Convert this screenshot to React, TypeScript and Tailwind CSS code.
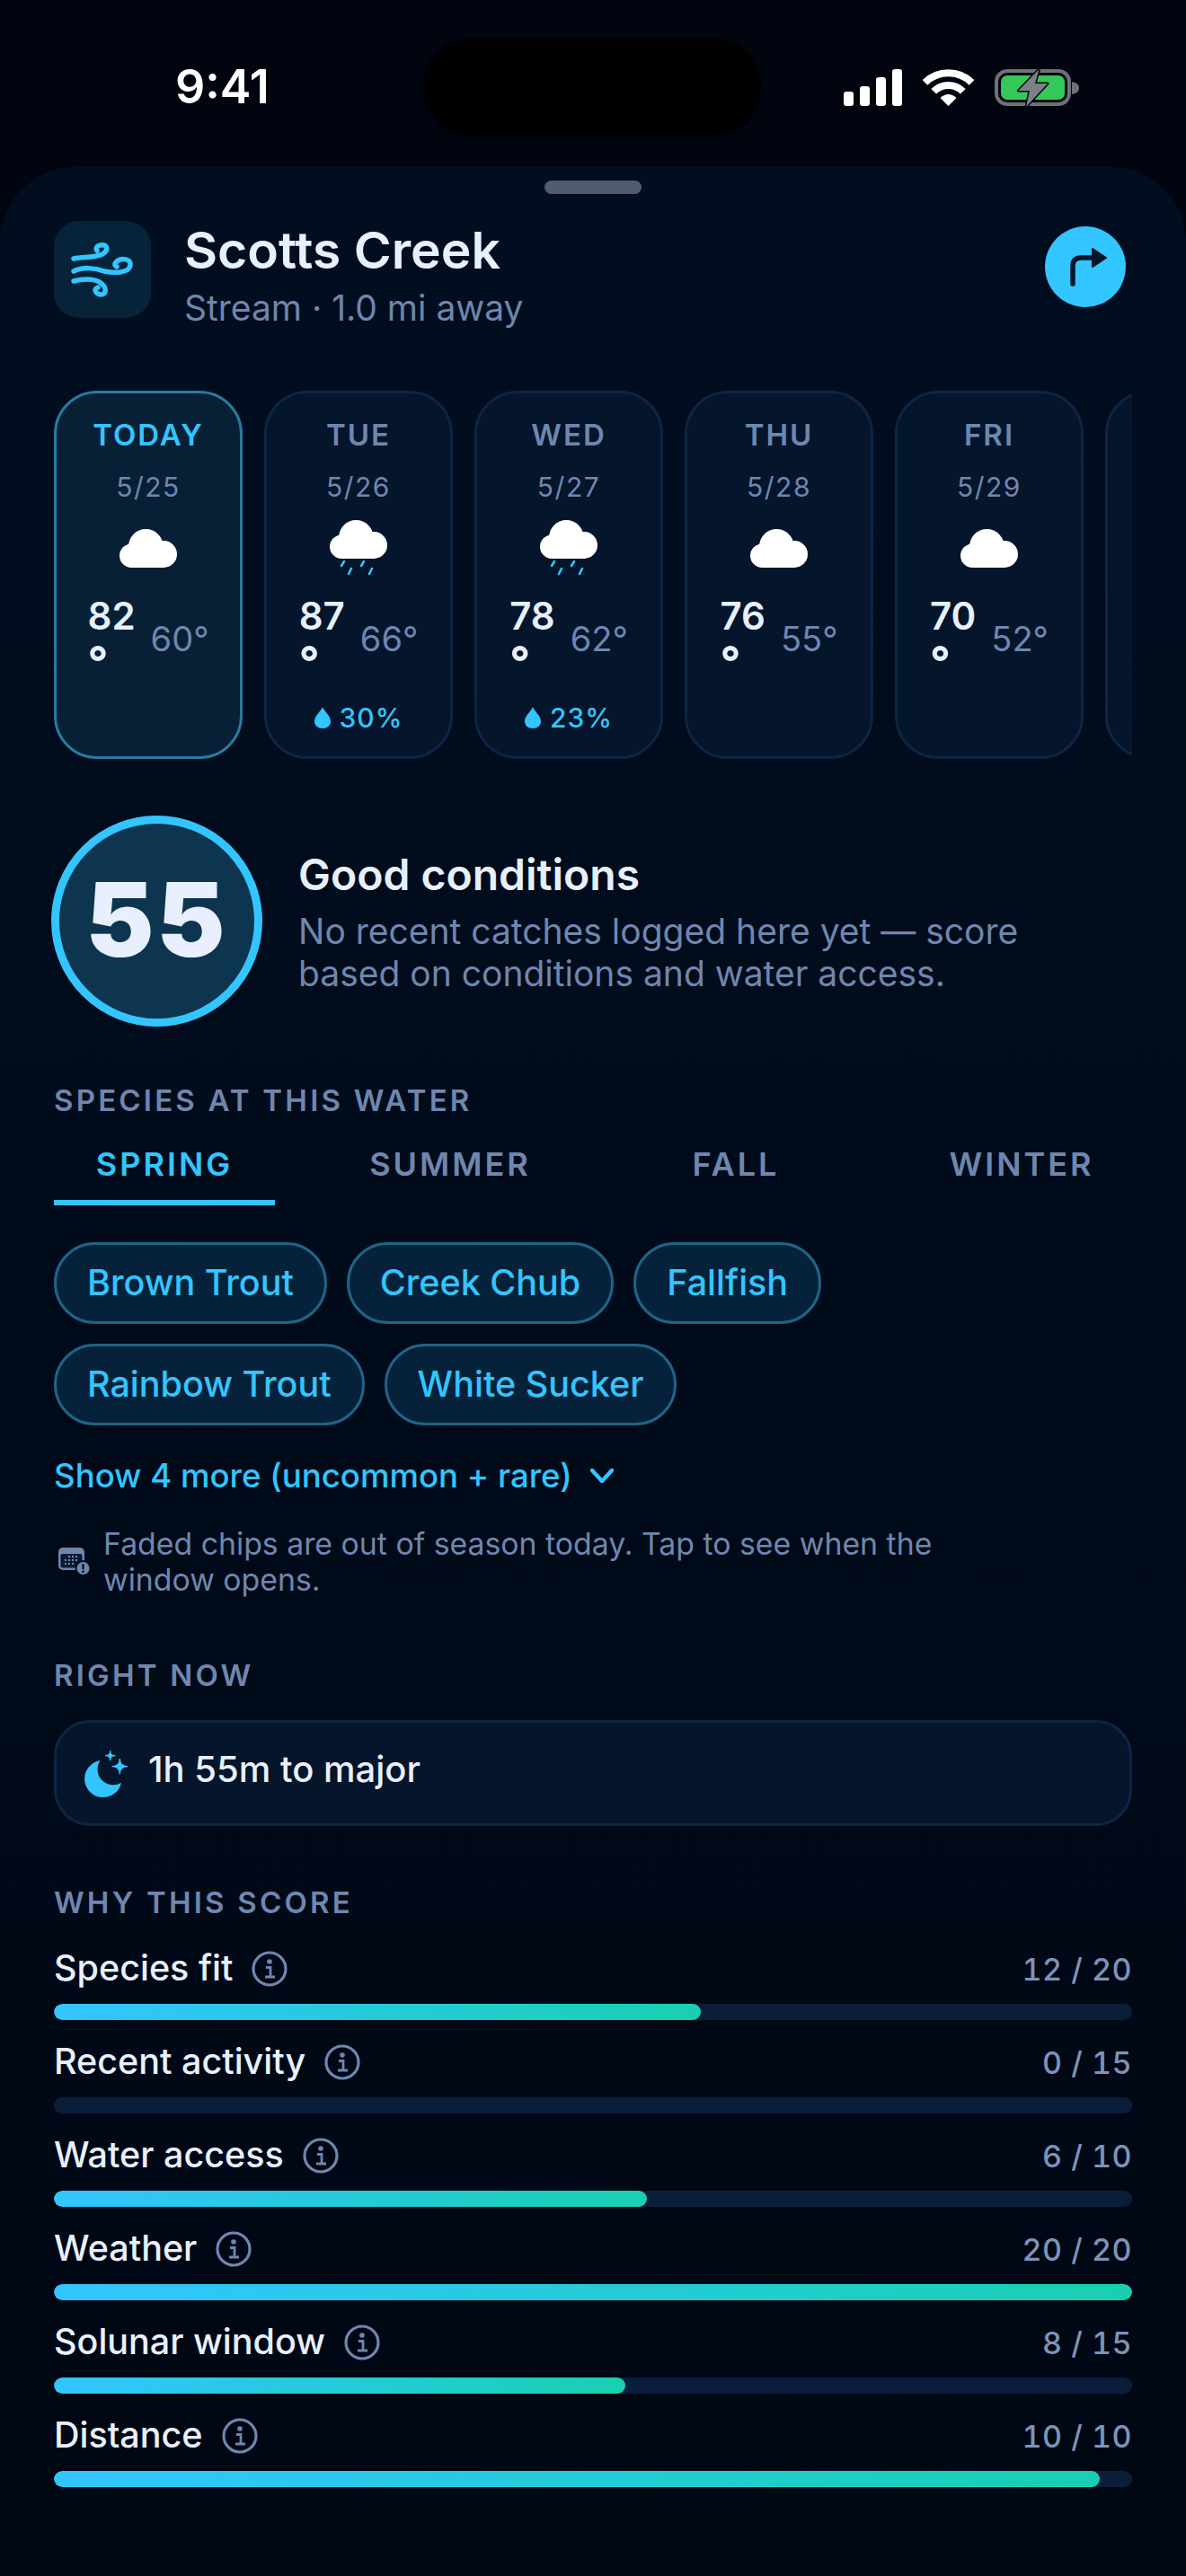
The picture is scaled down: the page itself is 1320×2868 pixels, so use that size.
const days = [
  { name: "TODAY", date: "5/25", high: "82", low: "60°", today: true },
  { name: "TUE", date: "5/26", high: "87", low: "66°", rain: "30%" },
  { name: "WED", date: "5/27", high: "78", low: "62°", rain: "23%" },
  { name: "THU", date: "5/28", high: "76", low: "55°" },
  { name: "FRI", date: "5/29", high: "70", low: "52°" },
];

const chips = ["Brown Trout", "Creek Chub", "Fallfish", "Rainbow Trout", "White Sucker"];

const scores = [
  { label: "Species fit", value: "12 / 20", pct: 60 },
  { label: "Recent activity", value: "0 / 15", pct: 0 },
  { label: "Water access", value: "6 / 10", pct: 55 },
  { label: "Weather", value: "20 / 20", pct: 100 },
  { label: "Solunar window", value: "8 / 15", pct: 53 },
  { label: "Distance", value: "10 / 10", pct: 97 },
];

function StatusIcons() {
  return (
    <div className="flex items-center">
      <svg width="65" height="41" viewBox="0 0 65 41" fill="#fff">
        <rect x="0" y="25" width="11" height="16" rx="3" />
        <rect x="18" y="19" width="11" height="22" rx="3" />
        <rect x="36" y="9" width="11" height="32" rx="3" />
        <rect x="54" y="0" width="11" height="41" rx="3" />
      </svg>
      <svg className="ml-[23px]" width="57" height="41" viewBox="0 0 57 41" fill="none" stroke="#fff" strokeWidth="8">
        <path d="M2.5 15 A37 37 0 0 1 54.5 15" />
        <path d="M12.2 24.7 A23 23 0 0 1 44.8 24.7" />
        <path d="M28.5 41 L19.5 32 Q28.5 24 37.5 32 Z" fill="#fff" stroke="none" />
      </svg>
      <svg className="ml-[23px]" width="94" height="43" viewBox="0 0 94 43" fill="none">
        <rect x="2" y="3" width="81" height="37" rx="12" stroke="#6e7178" strokeWidth="4" />
        <rect x="7" y="8" width="71" height="27" rx="7" fill="#34c759" />
        <path d="M86 15 C91 16 94 18 94 22 C94 26 91 28 86 29 Z" fill="#6e7178" />
        <path
          d="M49.5 1 L26.4 25 L39 25 L35 43 L59 17 L45 17 Z"
          fill="#7d8087"
          stroke="#01060f"
          strokeWidth="3"
          strokeLinejoin="round"
          paintOrder="stroke"
        />
      </svg>
    </div>
  );
}

function WindIcon() {
  return (
    <svg width="90" height="80" viewBox="0 0 90 80" fill="none" stroke="#33c5ff" strokeWidth="5.5" strokeLinecap="round">
      <path d="M13 28 C23 26 37 27 45 23 C53 18 50 12 43 13 C39 13 37 17 39 19" />
      <path d="M13 42 C23 37 37 38 47 42 C57 44 75 45 76 35 C77 28 65 26 60 32 C58 34 59 36 61 37" />
      <path d="M13 53 C23 50 37 50 43 55 C50 60 50 68 43 68 C37 67 35 62 40 60" />
    </svg>
  );
}

function Cloud({ rain }: { rain?: boolean }) {
  return (
    <svg width="64" height={rain ? 62 : 43} viewBox={rain ? "0 0 64 62" : "0 0 64 43"} fill="#fff">
      <circle cx="29.3" cy="19.3" r="19.3" />
      <circle cx="13.3" cy="29.7" r="13.3" />
      <circle cx="49" cy="28" r="15" />
      <rect x="13" y="26" width="37" height="17" />
      {rain && (
        <g stroke="#33c5ff" strokeWidth="2.6" strokeLinecap="round">
          <path d="M16 46 L13 51" />
          <path d="M24 54 L21 60" />
          <path d="M38 46 L35 51" />
          <path d="M47 54 L44 60" />
        </g>
      )}
    </svg>
  );
}

function Drop() {
  return (
    <svg width="18" height="24" viewBox="0 0 18 24" fill="#33c5ff">
      <path d="M9 0 C11 5 18 10 18 16 C18 21 14 24 9 24 C4 24 0 21 0 16 C0 10 7 5 9 0 Z" />
    </svg>
  );
}

function DayCard({ day }: { day: (typeof days)[number] }) {
  return (
    <div
      className={`flex h-[410px] w-[210px] shrink-0 flex-col items-center rounded-[48px] border-[3px] pt-[26px] pb-[25px] ${
        day.today ? "border-[#2a7a9e] bg-[#072036]" : "border-[#0c2643] bg-[#04152c]"
      }`}
    >
      <div
        className={`text-[33px] leading-[40px] font-semibold tracking-[2px] ${
          day.today ? "text-[#33c5ff]" : "text-[#6f87ae]"
        }`}
      >
        {day.name}
      </div>
      <div className="mt-[18px] text-[30px] leading-[40px] tracking-[1.5px] text-[#6f87ae]">{day.date}</div>
      <div className="mt-[13px] flex h-[70px] items-center justify-center">
        <Cloud rain={!!day.rain} />
      </div>
      <div className="mt-[15px] flex items-center gap-[17px]">
        <div className="text-[42px] leading-[52px] font-semibold text-[#e8f0ff]">
          {day.high}
          <br />
          <span className="text-[50px] leading-none font-bold">°</span>
        </div>
        <div className="mb-[4px] text-[38px] leading-[48px] text-[#6f87ae]">{day.low}</div>
      </div>
      {day.rain && (
        <div className="mt-auto flex items-center gap-[10px] text-[30px] leading-[36px] font-medium tracking-[1px] text-[#33c5ff]">
          <Drop />
          {day.rain}
        </div>
      )}
    </div>
  );
}

function SectionLabel({ children }: { children: string }) {
  return <div className="text-[33px] leading-[40px] font-semibold tracking-[3.2px] text-[#6f87ae]">{children}</div>;
}

function InfoIcon() {
  return (
    <svg width="40" height="40" viewBox="0 0 40 40" fill="none" stroke="#6f87ae" strokeWidth="3.2">
      <circle cx="20" cy="20" r="18" />
      <circle cx="20" cy="12" r="2.8" fill="#6f87ae" stroke="none" />
      <path d="M16 18.5 H21 V29 M15 29 H26" strokeWidth="2.8" />
    </svg>
  );
}

function CalendarIcon() {
  return (
    <svg className="ml-[4px] shrink-0" width="36" height="32" viewBox="0 0 36 32">
      <rect x="1" y="0" width="29" height="25" rx="5" fill="#6f87ae" />
      <rect x="3.5" y="7" width="24" height="15.5" rx="2" fill="#0b1a33" />
      <g fill="#6f87ae">
        <rect x="12" y="9" width="2" height="2" />
        <rect x="16" y="9" width="2" height="2" />
        <rect x="20" y="9" width="2" height="2" />
        <rect x="8" y="13" width="2" height="2" />
        <rect x="12" y="13" width="2" height="2" />
        <rect x="16" y="13" width="2" height="2" />
        <rect x="20" y="13" width="2" height="2" />
        <rect x="8" y="17" width="2" height="2" />
        <rect x="12" y="17" width="2" height="2" />
        <rect x="16" y="17" width="2" height="2" />
      </g>
      <circle cx="28.5" cy="23" r="9" fill="#010a1b" />
      <circle cx="28.5" cy="23" r="7" fill="#6f87ae" />
      <rect x="27.4" y="18" width="2.2" height="6.4" rx="1" fill="#010a1b" />
      <circle cx="28.5" cy="26.8" r="1.3" fill="#010a1b" />
    </svg>
  );
}

function MoonIcon() {
  return (
    <svg className="shrink-0" width="70" height="60" viewBox="0 0 210 180" fill="#33c5ff">
      <path d="M80 48 A62 62 0 1 0 150 122 A52 52 0 0 1 80 48 Z" />
      <path d="M113 15 Q113 32 130 32 Q113 32 113 49 Q113 32 96 32 Q113 32 113 15 Z" stroke="#33c5ff" strokeWidth="3" />
      <path d="M145 42 Q145 68 171 68 Q145 68 145 94 Q145 68 119 68 Q145 68 145 42 Z" stroke="#33c5ff" strokeWidth="4" />
    </svg>
  );
}

export default function App() {
  return (
    <div
      className="flex h-[2868px] w-[1320px] flex-col overflow-hidden bg-[#01050f] text-[#e8f0ff]"
      style={{ fontFamily: 'Inter, "Liberation Sans", sans-serif' }}
    >
      <header className="flex h-[186px] shrink-0 items-start pt-[42px]">
        <div className="flex h-[110px] w-[471px] items-center pl-[195px] text-[52px] font-semibold text-white">
          9:41
        </div>
        <div className="h-[110px] w-[376px] rounded-full bg-black" />
        <div className="flex h-[110px] items-center pl-[92px]">
          <StatusIcons />
        </div>
      </header>

      <main className="flex-1 rounded-t-[84px] bg-linear-to-b from-[#010e20] to-[#000713] px-[60px] pt-[15px]">
        <div className="mx-auto h-[15px] w-[108px] rounded-full bg-[#4f5b73]" />

        <section className="mt-[30px] flex h-[108px] items-center">
          <div className="flex h-[108px] w-[108px] items-center justify-center rounded-[28px] bg-[#06233a]">
            <WindIcon />
          </div>
          <div className="ml-[37px] flex-1 self-start">
            <h1 className="text-[57px] leading-[66px] font-semibold text-[#e8f0ff]">Scotts Creek</h1>
            <p className="mt-[8px] text-[39px] leading-[46px] text-[#6f87ae]">Stream · 1.0 mi away</p>
          </div>
          <button className="mr-[7px] mb-[6px] flex h-[90px] w-[90px] items-center justify-center rounded-full bg-[#33c5ff] pl-[6px]">
            <svg width="46" height="46" viewBox="0 0 46 46" fill="#04152c">
              <path d="M6 42 V22 Q6 13 15 13 H28" fill="none" stroke="#04152c" strokeWidth="5.5" strokeLinecap="round" />
              <path d="M28 3 L43 13 L28 23 Z" strokeLinejoin="round" stroke="#04152c" strokeWidth="2" />
            </svg>
          </button>
        </section>

        <section className="mt-[81px] flex gap-[24px] overflow-hidden">
          {days.map((day) => (
            <DayCard key={day.name} day={day} />
          ))}
          <div className="h-[410px] w-[210px] shrink-0 rounded-[48px] border-[3px] border-[#0c2643] bg-[#04152c]" />
        </section>

        <section className="mt-[63px] -ml-[3px] flex items-center gap-[40px]">
          <div className="flex h-[235px] w-[235px] shrink-0 items-center justify-center rounded-full border-[9px] border-[#33c5ff] bg-[#0d3550] pb-[4px] text-[114px] leading-none font-black tracking-[3px] text-[#e8f0ff]">
            55
          </div>
          <div className="max-w-[860px]">
            <h2 className="text-[48px] leading-[58px] font-semibold text-[#e8f0ff]">Good conditions</h2>
            <p className="mt-[10px] text-[39px] leading-[47px] text-[#6f87ae]">
              No recent catches logged here yet — score based on conditions and water access.
            </p>
          </div>
        </section>

        <section className="mt-[62px]">
          <SectionLabel>SPECIES AT THIS WATER</SectionLabel>
          <div className="mt-[31px] flex gap-[72px]">
            {["SPRING", "SUMMER", "FALL", "WINTER"].map((tab, i) => (
              <div
                key={tab}
                className={`flex-1 border-b-[6px] pb-[20px] text-center text-[36px] leading-[40px] font-semibold tracking-[3px] ${
                  i === 0 ? "border-[#33c5ff] text-[#33c5ff]" : "border-transparent text-[#6f87ae]"
                }`}
              >
                {tab}
              </div>
            ))}
          </div>
          <div className="mt-[41px] flex flex-wrap gap-[22px]">
            {chips.map((chip) => (
              <div
                key={chip}
                className="flex h-[91px] items-center rounded-full border-[3px] border-[#1f6487] bg-[#06223a] px-[34px] text-[39.5px] font-medium text-[#33c5ff]"
              >
                {chip}
              </div>
            ))}
          </div>
          <div className="mt-[32px] flex h-[48px] items-center gap-[20px] text-[36.6px] font-medium text-[#33c5ff]">
            Show 4 more (uncommon + rare)
            <svg width="26" height="16" viewBox="0 0 26 16" fill="none" stroke="#33c5ff" strokeWidth="4.5" strokeLinecap="round" strokeLinejoin="round">
              <path d="M2 2 L13 14 L24 2" />
            </svg>
          </div>
          <div className="mt-[32px] flex max-w-[1000px] items-center gap-[15px]">
            <CalendarIcon />
            <p className="text-[33.8px] leading-[40px] text-[#6f87ae]">
              Faded chips are out of season today. Tap to see when the window opens.
            </p>
          </div>
        </section>

        <section className="mt-[66px]">
          <SectionLabel>RIGHT NOW</SectionLabel>
          <div className="mt-[30px] flex h-[118px] items-center gap-[10px] rounded-[40px] border-[3px] border-[#0c2643] bg-[#04152c] pl-[22px] text-[40px] font-medium text-[#e8f0ff]">
            <MoonIcon />
            <span className="pb-[8px]">1h 55m to major</span>
          </div>
        </section>

        <section className="mt-[65px]">
          <SectionLabel>WHY THIS SCORE</SectionLabel>
          <div className="mt-[32px] flex flex-col gap-[25px]">
            {scores.map((row) => (
              <div key={row.label}>
                <div className="flex h-[44px] items-center">
                  <span className="text-[39.5px] font-medium text-[#e8f0ff]">{row.label}</span>
                  <span className="ml-[21px]">
                    <InfoIcon />
                  </span>
                  <span className="ml-auto text-[34px] font-medium tracking-[0.5px] text-[#7d94b8] tabular-nums">{row.value}</span>
                </div>
                <div className="mt-[17px] h-[18px] overflow-hidden rounded-full bg-[#0a1e3a]">
                  <div
                    className="h-full rounded-full bg-linear-to-r from-[#33c5ff] to-[#18d0b0]"
                    style={{ width: `${row.pct}%` }}
                  />
                </div>
              </div>
            ))}
          </div>
        </section>
      </main>
    </div>
  );
}
